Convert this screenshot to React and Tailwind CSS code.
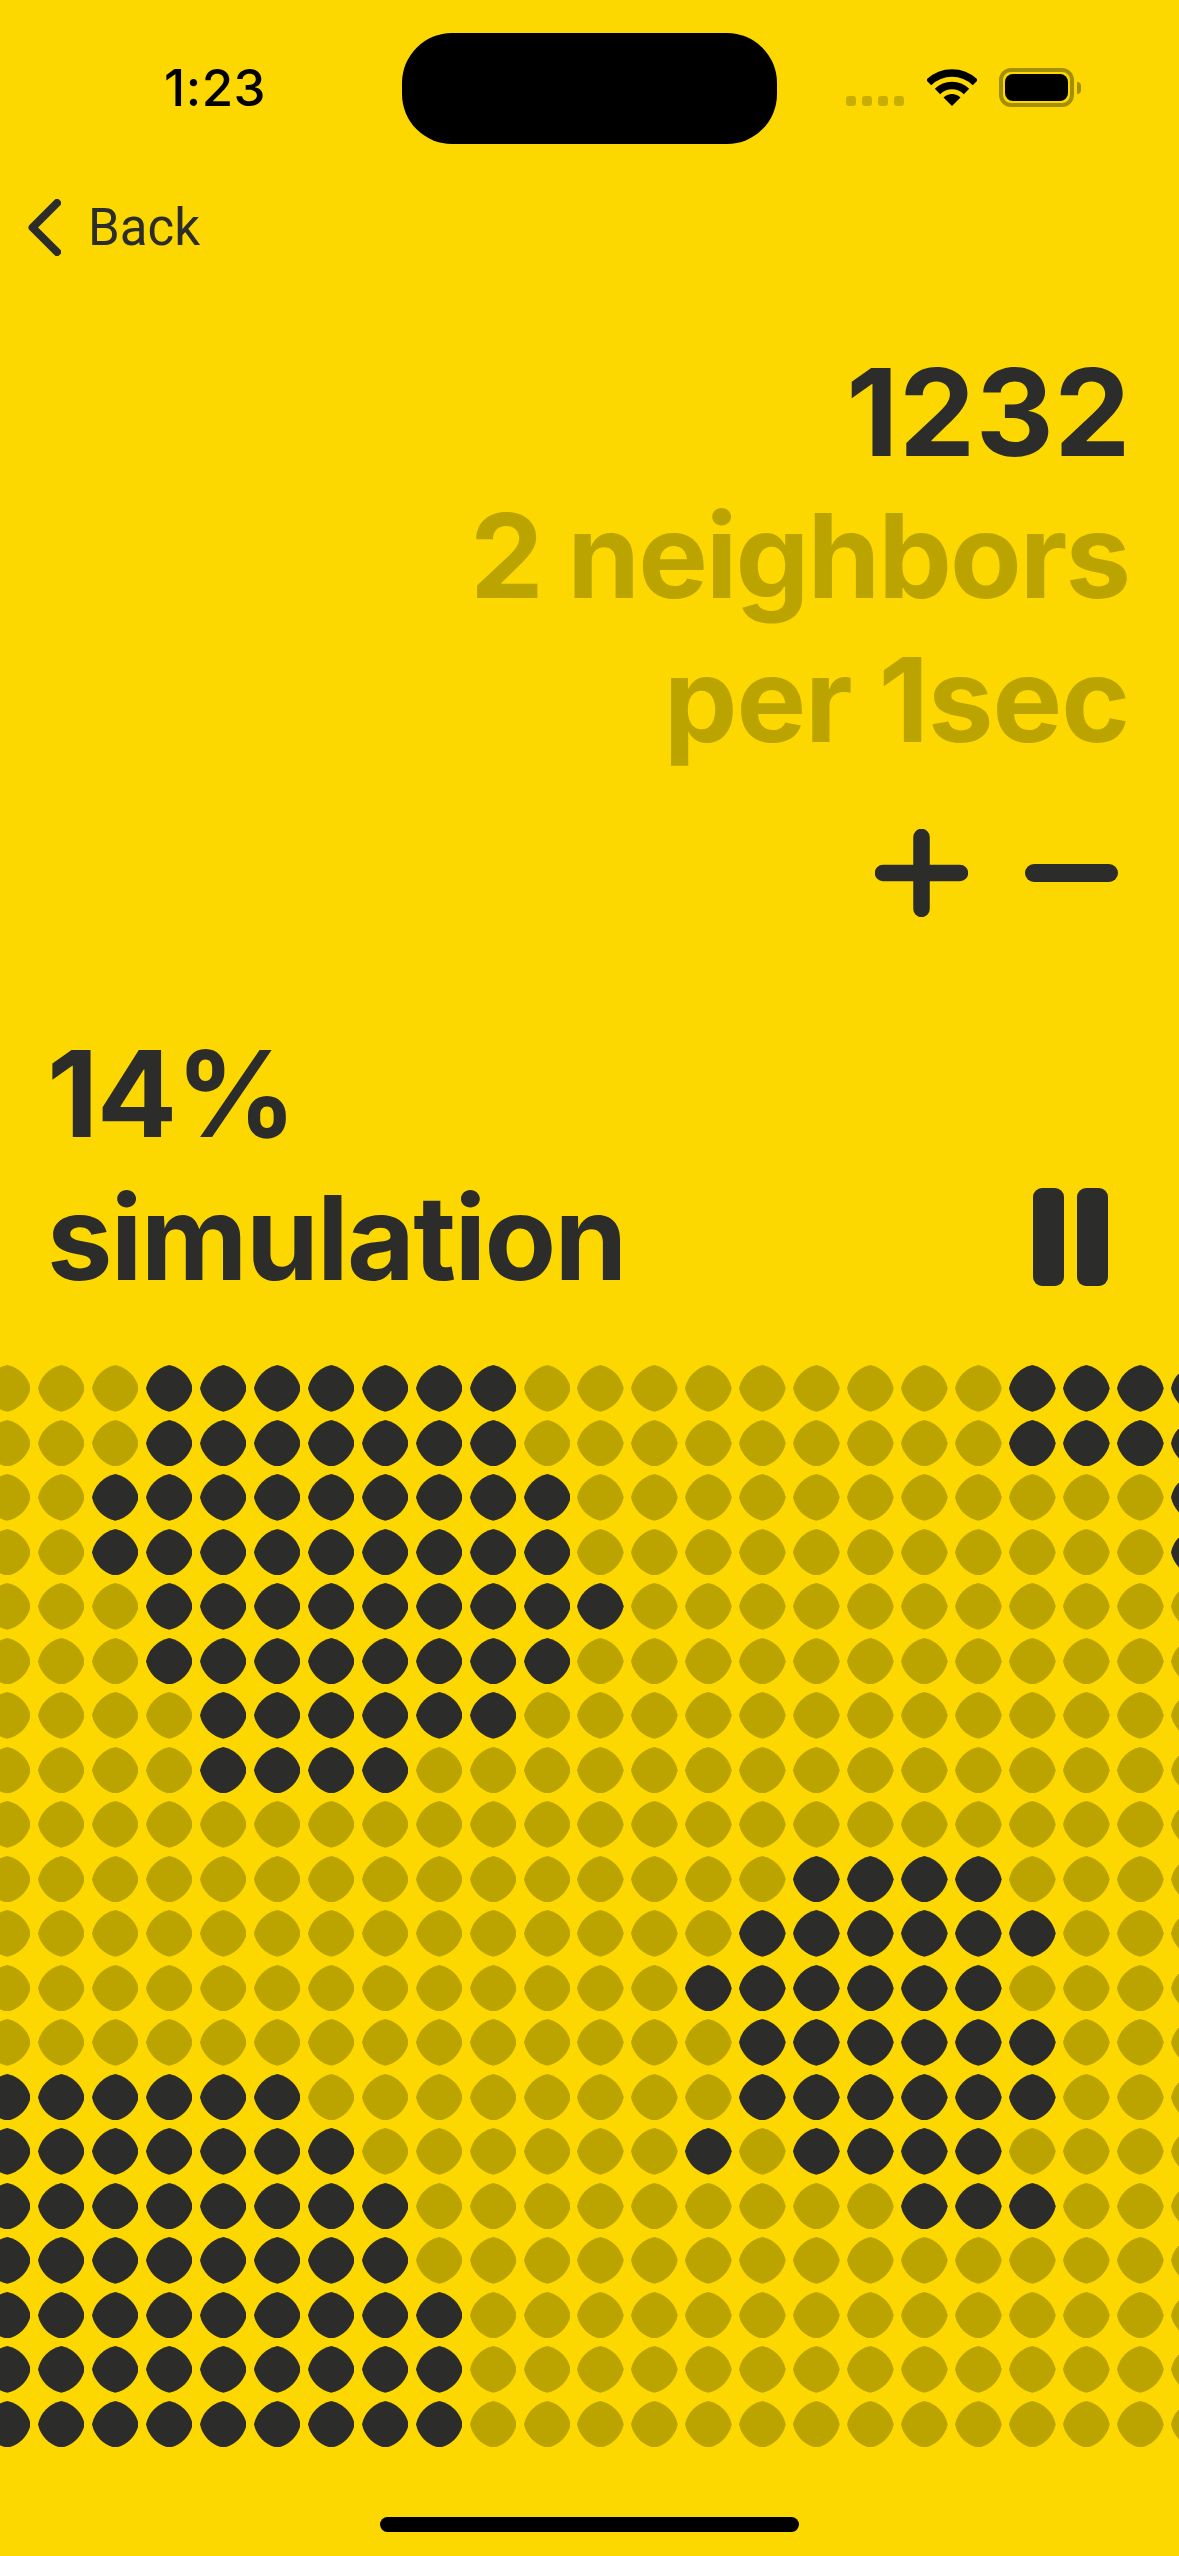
const DARK_RANGES = [
  [[3, 9], [19, 22]],
  [[3, 9], [19, 22]],
  [[2, 10], [22, 22]],
  [[2, 10], [22, 22]],
  [[3, 11]],
  [[3, 10]],
  [[4, 9]],
  [[4, 7]],
  [],
  [[15, 18]],
  [[14, 19]],
  [[13, 18]],
  [[14, 19]],
  [[0, 5], [14, 19]],
  [[0, 6], [13, 13], [15, 18]],
  [[0, 7], [17, 19]],
  [[0, 7]],
  [[0, 8]],
  [[0, 8]],
  [[0, 8]],
];

function Cell({ dark }) {
  return (
    <svg viewBox="0 0 47 47" className="block w-[46.7px] h-[46.7px]" aria-hidden="true">
      <path
        d="M23.5 0A30 30 0 0 1 47 23.5A30 30 0 0 1 23.5 47A30 30 0 0 1 0 23.5A30 30 0 0 1 23.5 0Z"
        fill={dark ? "#2C2C2A" : "#BCA400"}
      />
    </svg>
  );
}

function Wifi() {
  const arc = (r) => {
    const d = r * 0.7071;
    return `M${25 - d} ${37 - d}A${r} ${r} 0 0 1 ${25 + d} ${37 - d}`;
  };
  return (
    <svg viewBox="0 0 50 38" className="w-[50px] h-[38px]" aria-hidden="true">
      <path d={arc(33)} fill="none" stroke="#000" strokeWidth="7.5" />
      <path d={arc(20.5)} fill="none" stroke="#000" strokeWidth="7.5" />
      <path d="M25 37L16.5 28.5A12 12 0 0 1 33.5 28.5Z" fill="#000" />
    </svg>
  );
}

export default function App() {
  return (
    <div
      className="w-[1179px] h-[2556px] overflow-hidden bg-[#FCD800] text-[#2C2C2A] flex flex-col"
      style={{ fontFamily: "Inter, 'Liberation Sans', sans-serif" }}
    >
      {/* status bar */}
      <div className="relative h-[144px] shrink-0 flex items-start pt-[33px]">
        <div className="w-[402px] pl-[164px] pt-[30px] text-[51px] leading-[50px] font-medium text-black tracking-[0.5px]">
          1:23
        </div>
        <div className="w-[375px] h-[111px] rounded-[50px] bg-black shrink-0" />
        <div className="flex items-end ml-[69px] h-[74px]">
          <div className="flex gap-[6px] mb-[1px] mr-[23px]">
            <div className="w-[10px] h-[10px] rounded-[3px] bg-[#C9AE00]" />
            <div className="w-[10px] h-[10px] rounded-[3px] bg-[#C9AE00]" />
            <div className="w-[10px] h-[10px] rounded-[3px] bg-[#C9AE00]" />
            <div className="w-[10px] h-[10px] rounded-[3px] bg-[#C9AE00]" />
          </div>
          <Wifi />
          <div className="flex items-center ml-[22px]">
            <div className="w-[75px] h-[39px] rounded-[12px] border-[4px] border-[#A38F00] p-[2px]">
              <div className="w-full h-full rounded-[8px] bg-black" />
            </div>
            <div className="w-[4px] h-[12px] ml-[3px] rounded-r-[4px] bg-[#A38F00]" />
          </div>
        </div>
      </div>

      {/* back */}
      <div className="flex items-center h-[60px] mt-[54px] pl-[28px] shrink-0">
        <svg viewBox="0 0 33 57" className="w-[33px] h-[57px] -mt-[2px]" aria-hidden="true">
          <path d="M29 4L4.5 28.5L29 53" fill="none" stroke="#2C2C2A" strokeWidth="8" strokeLinecap="round" strokeLinejoin="round" />
        </svg>
        <span className="ml-[27px] text-[51px] leading-[60px] font-normal" style={{ fontFamily: "Roboto, sans-serif" }}>
          Back
        </span>
      </div>

      {/* stats */}
      <div className="mt-[82px] pr-[51px] text-right text-[117px] leading-[144px] font-bold shrink-0">
        <div className="text-[121px] tracking-[0.5px] -mr-[3px]">1232</div>
        <div className="text-[#BCA400] tracking-[-2px] -mr-[1px]">2 neighbors</div>
        <div className="text-[#BCA400] tracking-[-1px] -mr-[1px]">per 1sec</div>
      </div>

      {/* plus / minus */}
      <div className="flex justify-end gap-[57px] pr-[61px] mt-[57px] shrink-0">
        <svg viewBox="0 0 93 88" className="w-[93px] h-[88px]" aria-hidden="true">
          <path d="M46.5 8V80M8 44H85" fill="none" stroke="#2C2C2A" strokeWidth="16.5" strokeLinecap="round" />
        </svg>
        <svg viewBox="0 0 93 88" className="w-[93px] h-[88px]" aria-hidden="true">
          <path d="M9 44H84" fill="none" stroke="#2C2C2A" strokeWidth="18" strokeLinecap="round" />
        </svg>
      </div>

      {/* simulation */}
      <div className="flex justify-between items-end mt-[105px] pl-[47px] pr-[71px] shrink-0">
        <div className="text-[117px] leading-[144px] font-bold">
          <div className="text-[119px] tracking-[-1.5px]">14%</div>
          <div className="tracking-[-1.7px]">simulation</div>
        </div>
        <div className="flex gap-[13px] mb-[24px]">
          <div className="w-[31px] h-[98px] rounded-[9px] bg-[#2C2C2A]" />
          <div className="w-[31px] h-[98px] rounded-[9px] bg-[#2C2C2A]" />
        </div>
      </div>

      {/* grid */}
      <div className="mt-[55px] ml-[-16.35px] grid grid-cols-[repeat(23,46.7px)] gap-x-[7.3px] gap-y-[7.83px] shrink-0">
        {DARK_RANGES.map((ranges, r) =>
          Array.from({ length: 23 }, (_, c) => (
            <Cell key={`${r}-${c}`} dark={ranges.some(([a, b]) => c >= a && c <= b)} />
          ))
        )}
      </div>

      {/* home indicator */}
      <div className="mt-[70px] mx-auto w-[419px] h-[15px] rounded-full bg-black shrink-0" />
    </div>
  );
}
